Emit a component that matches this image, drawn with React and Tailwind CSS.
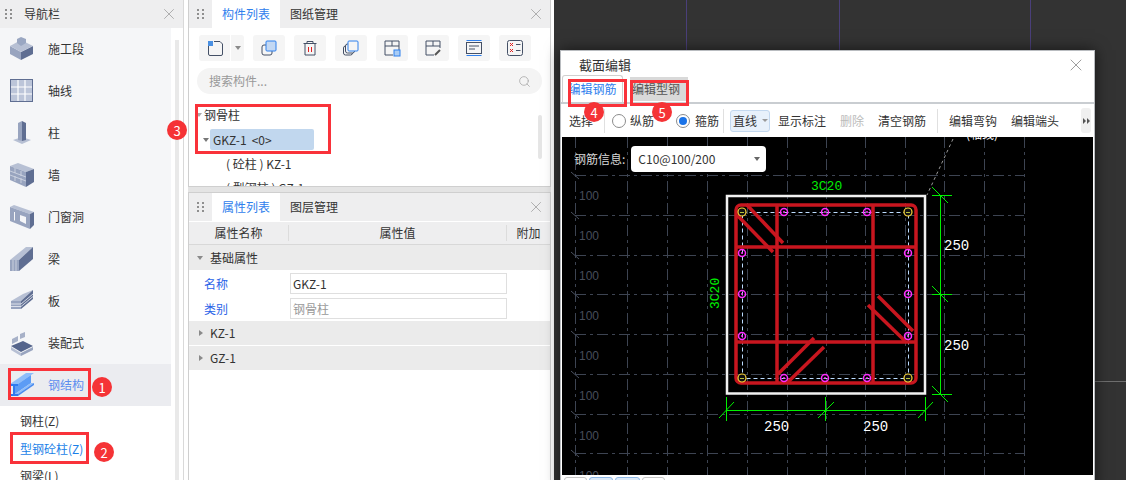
import { X, Search } from 'lucide-react'

const NAV_ITEMS = ['施工段', '轴线', '柱', '墙', '门窗洞', '梁', '板', '装配式']
const TOP = '#b7c0d4'
const LEFT = '#98a4bf'
const DARK = '#5f6e92'

function NavIcon({ index }) {
  const shapes = [
    <>
      <polygon points="1,10 12,16 12,24 1,18" fill={LEFT} />
      <polygon points="12,16 24,10 24,18 12,24" fill={DARK} />
      <polygon points="1,10 12,4 24,10 12,16" fill={TOP} />
      <polygon points="8,3 12,1 17,3 17,7 12,10 8,7" fill="#9aa7c2" />
    </>,
    <>
      <rect x="1" y="1" width="23" height="23" fill="#5f6e92" />
      <rect x="2" y="2" width="21" height="21" fill="#bcc5d9" />
      <path d="M9 2v21M16 2v21M2 9h21M2 16h21" stroke="#fff" strokeWidth="1.2" />
    </>,
    <>
      <polygon points="4,20 13,17 22,20 13,24" fill={TOP} />
      <polygon points="9,3 13,1 13,21 9,20" fill={LEFT} />
      <polygon points="13,1 17,3 17,20 13,21" fill={DARK} />
    </>,
    <>
      <polygon points="1,4 9,1 25,7 17,10" fill={TOP} />
      <polygon points="1,4 17,10 17,25 1,18" fill={LEFT} />
      <polygon points="17,10 25,7 25,20 17,25" fill={DARK} />
      <path d="M1 9l16 6M1 13l16 6M6 6v5M12 9v5M6 14v5M12 16v5" stroke="#d5dae6" strokeWidth=".8" />
    </>,
    <>
      <polygon points="1,3 5,1 25,8 21,10" fill={TOP} />
      <polygon points="1,3 21,10 21,25 1,17" fill={LEFT} />
      <polygon points="21,10 25,8 25,21 21,25" fill={DARK} />
      <polygon points="5,8 6,8 6,17 5,16" fill="#f5f6f8" />
      <polygon points="11,11 17,13 17,20 11,17" fill="#f5f6f8" />
    </>,
    <>
      <polygon points="1,14 17,1 24,1 10,14" fill={TOP} />
      <polygon points="1,14 10,14 10,25 1,25" fill={LEFT} />
      <polygon points="10,14 24,1 24,13 10,25" fill={DARK} />
      <path d="M4 14v11M7 14v11" stroke="#d5dae6" strokeWidth=".8" />
    </>,
    <>
      <polygon points="2,13 14,6 24,2 12,13" fill={TOP} />
      <polygon points="2,13 12,13 12,21 2,21" fill={LEFT} />
      <polygon points="12,13 24,2 24,11 12,21" fill={DARK} />
      <path d="M2 16h10M2 18.500h10M12 16l12-10M12 18.500l12-10" stroke="#eef0f5" strokeWidth=".8" />
    </>,
    <>
      <polygon points="2,16 14,11 24,16 12,22" fill="#55658c" />
      <polygon points="2,17 12,23 12,26 2,20" fill={TOP} />
      <polygon points="12,23 24,17 24,20 12,26" fill={LEFT} />
      <polygon points="3,9 9,6 9,11 3,14" fill="#a7b1c8" />
      <polygon points="11,4 16,2 16,7 11,9" fill="#a7b1c8" />
    </>,
  ]
  return (
    <svg width="26" height="26" viewBox="0 0 26 26" className="ml-[9px] mr-[13px] shrink-0">
      {shapes[index]}
    </svg>
  )
}

function SteelIcon() {
  return (
    <svg width="26" height="26" viewBox="0 0 26 26" className="ml-[9px] mr-[13px] shrink-0">
      <polygon points="1,12 9,12 25,1 17,1" fill="#8dbdfa" />
      <polygon points="6,14 22,3 22,11 6,22" fill="#5c9cf5" />
      <polygon points="6,22 22,11 25,11 9,22" fill="#8dbdfa" />
      <polygon points="9,22 25,11 25,13 9,24" fill="#4a8cf0" />
      <polygon points="1,12 9,12 9,14 6,14 6,22 9,22 9,24 1,24 1,22 4,22 4,14 1,14" fill="#2f7bf0" />
    </svg>
  )
}

function Grip() {
  return (
    <span className="grid w-[7px] shrink-0 grid-cols-2 gap-[2px]">
      {[0, 1, 2, 3, 4, 5].map((i) => (
        <i key={i} className="size-[2px] bg-[#8f8f8f]" />
      ))}
    </span>
  )
}

function PanelTabs({ active, other }) {
  return (
    <div className="flex h-7 shrink-0 items-stretch bg-[#eeeeef]">
      <div className="flex w-[23px] items-center justify-center"><Grip /></div>
      <div className="flex w-[68px] items-center justify-center bg-white text-[#2f80ed]">{active}</div>
      <div className="ml-[10px] flex items-center text-[#333]">{other}</div>
      <X size={18} strokeWidth={1} className="ml-auto mr-[5px] self-center text-[#9a9a9a]" />
    </div>
  )
}

function ToolButton({ children }) {
  return (
    <div className="flex h-[26px] w-8 items-center justify-center rounded-[3px] bg-[#f5f5f5]">
      <svg width="18" height="18" viewBox="0 0 18 18" fill="none" stroke="#445066" strokeWidth="1">{children}</svg>
    </div>
  )
}

function Badge({ n, className }) {
  return (
    <div className={`absolute flex size-5 items-center justify-center rounded-full bg-[#f53336] text-[13px] leading-none text-white ${className}`}>
      {n}
    </div>
  )
}

function RedBox({ className }) {
  return <div className={`pointer-events-none absolute border-[3px] border-[#f9323a] ${className}`} />
}

function Radio({ checked }) {
  return (
    <span className="flex size-[14px] items-center justify-center rounded-full border border-[#8c8c8c] bg-white">
      {checked && <i className="size-2 rounded-full bg-[#1a73e8]" />}
    </span>
  )
}

const GRID_X = [575, 627, 667, 707, 747, 787, 826, 865, 905, 944, 984, 1024]
const GRID_Y = [175, 215, 255, 294, 334, 374, 414, 453]
const LABEL_Y = [195, 235, 275, 315, 355, 395, 435, 475]
const DOTS = [
  [784, 212], [825, 212], [867, 212], [784, 378], [825, 378], [867, 378],
  [742, 253], [742, 294], [742, 336], [908, 253], [908, 294], [908, 336],
]
const CORNERS = [[742, 212], [908, 212], [742, 378], [908, 378]]
const BARS = [
  [747, 205, 783, 243], [737, 215, 773, 252],
  [878, 296, 913, 331], [868, 305, 905, 341],
  [814, 338, 778, 374], [824, 347, 788, 382],
]

function SectionDrawing() {
  return (
    <svg className="absolute inset-0" width="531" height="338" viewBox="562 137 531 338">
      <g stroke="#3d4452" strokeDasharray="11 4 3 4" fill="none">
        {GRID_X.map((x) => <path key={x} d={`M${x + 0.5} 137V480`} />)}
        {GRID_Y.map((y) => <path key={y} d={`M575 ${y + 0.5}H1024`} />)}
      </g>
      <g stroke="#4a5160" fill="none">
        {GRID_Y.map((y) => <path key={y} d={`M571 ${y - 3}l8 7`} />)}
      </g>
      {LABEL_Y.map((y) => (
        <text key={y} x="579" y={y + 5} fill="#474d5a" fontSize="12" fontFamily="Liberation Sans">100</text>
      ))}
      <path d="M953 139L927 195" stroke="#9a9a9a" strokeDasharray="3 3" />
      <text x="982" y="139" fill="#fff" fontSize="12" textAnchor="middle" fontFamily="Noto Sans CJK SC">(轴线)</text>

      <rect x="727" y="196" width="198" height="197.500" fill="none" stroke="#f2f2f2" strokeWidth="2.500" />

      <rect x="742.500" y="212.500" width="166" height="166" fill="none" stroke="#bcdcff" strokeDasharray="4 3" />
      <g stroke="#c8161f" strokeWidth="3.500" fill="none">
        <rect x="736" y="205" width="180" height="178" rx="5" />
        <path d="M777 205V383M873 205V383M736 247H916M736 342H916" />
        {BARS.map(([a, b, c, d]) => <path key={a} d={`M${a} ${b}L${c} ${d}`} />)}
      </g>
      {DOTS.map(([x, y]) => (
        <g key={`${x}-${y}`}>
          <circle cx={x} cy={y} r="3.500" fill="none" stroke="#ff2cff" strokeWidth="1.500" />
          <circle cx={x} cy={y} r="1" fill="#ff2cff" />
        </g>
      ))}
      {CORNERS.map(([x, y]) => (
        <g key={`${x}-${y}`}>
          <circle cx={x} cy={y} r="4" fill="#111" stroke="#ffd93b" strokeWidth="1.200" />
          <path d={`M${x - 2} ${y + 0.5}h4`} stroke="#b8c23a" />
        </g>
      ))}

      <g stroke="#00f000" strokeWidth="1" fill="none">
        <path d="M940.500 195V394M932 195.500H952M932 294.500H952M932 394.500H952" />
        <path d="M726.500 397V421M825.500 397V421M925.500 397V421M726 410.500H926" />
        <path d="M932 187L948 203M932 286L948 302M932 386L948 402" />
        <path d="M719 418L734 402M818 418L834 402M918 418L933 402" />
      </g>
      <g fill="#fff" fontSize="14" fontFamily="Liberation Mono">
        <text x="764" y="431">250</text>
        <text x="863" y="431">250</text>
        <text x="944" y="250">250</text>
        <text x="944" y="350">250</text>
      </g>
      <g fill="#00f000" fontSize="13" fontFamily="Liberation Mono">
        <text x="811" y="190">3C20</text>
        <text x="0" y="0" transform="translate(719 309) rotate(-90)">3C20</text>
      </g>
    </svg>
  )
}

export default function App() {
  return (
    <div className="relative flex h-[480px] w-[1126px] overflow-hidden bg-white font-['Noto_Sans_CJK_SC','Liberation_Sans',sans-serif] text-xs text-[#333]">
      {/* 导航栏 */}
      <aside className="flex w-[184px] shrink-0 flex-col border-r border-[#d9d9d9]">
        <div className="flex h-7 shrink-0 items-center bg-[#eeeeef] pl-[5px]">
          <Grip />
          <span className="ml-3">导航栏</span>
          <X size={18} strokeWidth={1} className="ml-auto mr-[5px] text-[#9a9a9a]" />
        </div>
        <div className="flex min-h-0 flex-1">
          <div className="w-[171px] shrink-0">
            <div className="bg-[#f5f6f8]">
              {NAV_ITEMS.map((name, i) => (
                <div key={name} className="flex h-[42px] items-center">
                  <NavIcon index={i} />
                  {name}
                </div>
              ))}
              <div className="flex h-[42px] items-center bg-[#ebecf0] text-[#5b8def]">
                <SteelIcon />
                钢结构
              </div>
            </div>
            <div className="pl-5 leading-[27.500px]">
              <div className="mt-[1px]">钢柱(Z)</div>
              <div className="text-[#1a7fe8]">型钢砼柱(Z)</div>
              <div>钢梁(L)</div>
            </div>
          </div>
          <div className="mt-3 ml-1 w-1 bg-[#e9e9e9]" />
        </div>
      </aside>

      {/* 构件列表 + 属性列表 */}
      <main className="ml-[4px] flex w-[363px] shrink-0 flex-col bg-[#e4e4e4]">
        <section className="flex h-[187px] shrink-0 flex-col overflow-hidden border border-t-0 border-[#cfcfcf] bg-white">
          <PanelTabs active="构件列表" other="图纸管理" />
          <div className="mt-[7px] flex items-center gap-[9px] pl-[10px]">
            <div className="flex h-[26px] w-[45px] rounded-[3px] bg-[#f5f5f5]">
              <div className="flex w-8 items-center justify-center border-r border-white">
                <svg width="18" height="18" viewBox="0 0 18 18" fill="none" stroke="#445066">
                  <path d="M2.500 6.500V15a1.500 1.500 0 0 0 1.500 1.500H15a1.500 1.500 0 0 0 1.500-1.500V5L14 2.500H8" />
                  <rect x="2" y="2" width="5" height="5" fill="#4a90e2" stroke="none" />
                </svg>
              </div>
              <i className="mt-[11px] ml-[4px] size-0 border-x-[3px] border-t-[4px] border-x-transparent border-t-[#8a8a8a]" />
            </div>
            <ToolButton>
              <rect x="2" y="6" width="10" height="10" rx="2" />
              <rect x="6" y="2" width="10" height="10" rx="1" fill="#c3d8f3" stroke="#2f80ed" />
            </ToolButton>
            <ToolButton>
              <path d="M2.500 4.500h13M6 4.500V2.500h6v2M4 4.500v11.500h10V4.500" />
              <path d="M7.500 8v5M10.500 8v5" stroke="#e02020" />
            </ToolButton>
            <ToolButton>
              <rect x="1.500" y="7" width="9" height="9" rx="2" />
              <rect x="3.500" y="5" width="9" height="9" rx="2" fill="#f5f5f5" />
              <rect x="6" y="2" width="10" height="10" rx="1" fill="#f5f5f5" stroke="#2f80ed" />
            </ToolButton>
            <ToolButton>
              <path d="M2 16V2h14v9M2 7h14M9 2v5M2 16h8" />
              <rect x="11" y="11" width="6" height="6" fill="#a9ccf5" stroke="#2f80ed" />
            </ToolButton>
            <ToolButton>
              <path d="M2 16V2h14v7M2 7h14M9 2v5M2 16h8" />
              <path d="M11 16l5-5" stroke="#555" strokeWidth="2" />
            </ToolButton>
            <ToolButton>
              <path d="M1.500 1.500h15M1.500 16.500h15" stroke="#2f80ed" />
              <rect x="1.500" y="3.500" width="15" height="11" />
              <path d="M4 7h10M4 10h6" />
            </ToolButton>
            <ToolButton>
              <rect x="1.500" y="1.500" width="15" height="15" rx="2" />
              <path d="M4 4l3 3M7 4L4 7M4 10l3 3M7 10l-3 3" stroke="#e02020" />
              <path d="M10 5.500h4.500M10 11.500h4.500" />
            </ToolButton>
          </div>
          <div className="mx-2 mt-[7px] flex h-[26px] shrink-0 items-center rounded-full bg-[#f4f4f4] pl-3 pr-[11px] text-[#999]">
            搜索构件...
            <Search size={13} strokeWidth={1.5} className="ml-auto text-[#aaa]" />
          </div>
          <div className="relative mt-[9px] pl-[15px] leading-[24px]">
            <div className="flex h-[24px] items-center">钢骨柱</div>
            <div className="-ml-[-6px] mt-[2px] flex h-[21px] w-[104px] items-center rounded-[2px] bg-[#c1d7ee] pl-[3px]">
              GKZ-1 <span className="ml-[5px]">&lt;0&gt;</span>
            </div>
            <div className="mt-[2px] pl-[22px]">( 砼柱 ) KZ-1</div>
            <div className="pl-[22px]">( 型钢柱 ) GZ-1</div>
            <i className="absolute left-[7px] top-[10px] size-0 border-x-[3px] border-t-[4px] border-x-transparent border-t-[#aaa]" />
            <i className="absolute left-[14px] top-[35px] size-0 border-x-[3px] border-t-[4px] border-x-transparent border-t-[#777]" />
            <i className="absolute right-[8px] top-[12px] h-11 w-1 rounded bg-[#e6e6e6]" />
          </div>
        </section>

        <section className="mt-[5px] flex min-h-0 flex-1 flex-col border border-b-0 border-[#cfcfcf] bg-white">
          <PanelTabs active="属性列表" other="图层管理" />
          <div className="mt-[1px] flex h-[23px] shrink-0 items-center border-b border-[#d8d8d8] bg-[#eeeeef] text-center">
            <div className="w-[100px] border-r border-[#dcdcdc]">属性名称</div>
            <div className="w-[218px] border-r border-[#dcdcdc]">属性值</div>
            <div className="flex-1">附加</div>
          </div>
          <div className="flex h-[25px] items-center bg-[#ebebeb] pl-[8px]">
            <i className="mr-[7px] size-0 border-x-[3px] border-t-[4px] border-x-transparent border-t-[#8a8a8a]" />
            基础属性
          </div>
          <div className="mt-[3px] flex h-[21px] items-center text-[#2b63e8]">
            <span className="w-[101px] pl-[15px]">名称</span>
            <div className="flex h-[21px] w-[217px] items-center border border-[#dfdfdf] pl-[2px] text-[#333]">GKZ-1</div>
          </div>
          <div className="mt-[4px] flex h-[21px] items-center text-[#2b63e8]">
            <span className="w-[101px] pl-[15px]">类别</span>
            <div className="flex h-[21px] w-[217px] items-center border border-[#dfdfdf] pl-[2px] text-[#999]">钢骨柱</div>
          </div>
          <div className="mt-[2px] flex h-[24px] items-center bg-[#ebebeb] pl-[10px]">
            <i className="mr-[7px] size-0 border-y-[3px] border-l-[4px] border-y-transparent border-l-[#8a8a8a]" />
            KZ-1
          </div>
          <div className="mt-[1px] flex h-[24px] items-center bg-[#ebebeb] pl-[10px]">
            <i className="mr-[7px] size-0 border-y-[3px] border-l-[4px] border-y-transparent border-l-[#8a8a8a]" />
            GZ-1
          </div>
        </section>
      </main>

      {/* 绘图区 */}
      <div className="relative ml-[3px] flex-1 bg-[#333]">
        <i className="absolute left-[132px] top-0 h-[50px] w-px bg-[#4a3f7a]" />
        <i className="absolute left-[285px] top-0 h-[50px] w-px bg-[#4a3f7a]" />
        <i className="absolute left-[476px] top-0 h-[50px] w-px bg-[#4a3f7a]" />
        <i className="absolute left-[541px] right-0 top-[381px] h-px bg-[#6e6e6e]" />
      </div>

      {/* 截面编辑 窗口 */}
      <div className="absolute left-[560px] top-[50px] flex h-[440px] w-[535px] flex-col border border-[#b9bcc0] bg-white shadow-[0_0_14px_rgba(0,0,0,.6)]">
        <div className="flex h-[25px] shrink-0 items-center justify-between pl-[18px] pr-[8px] pt-[3px] text-[13px]">
          截面编辑
          <X size={20} strokeWidth={1} className="text-[#8a8a8a]" />
        </div>
        <div className="flex h-[28px] shrink-0 items-end border-b-2 border-[#c9cdd1]">
          <div className="ml-[1px] flex h-[27px] w-[61px] items-center justify-center rounded-t-[3px] border border-b-0 border-[#d0d0d0] bg-white text-[#2f80ed]">编辑钢筋</div>
          <div className="ml-[7px] mb-[1px] flex h-[24px] w-[58px] items-center bg-[#d9d9d9] pl-[2px] text-[#555]">编辑型钢</div>
        </div>
        <div className="flex h-[33px] shrink-0 items-center pl-2 pr-[3px]">
          <span>选择</span>
          <i className="ml-[11px] h-6 w-px bg-[#e0e0e0]" />
          <span className="ml-[7px]"><Radio /></span>
          <span className="ml-[4px]">纵筋</span>
          <span className="ml-[22px]"><Radio checked /></span>
          <span className="ml-[5px]">箍筋</span>
          <i className="ml-[4px] h-6 w-px bg-[#e0e0e0]" />
          <div className="ml-[6px] flex h-[22px] w-10 items-center rounded-[3px] border border-[#c3d8ef] bg-[#e8f1fb] pl-[2px]">
            直线
            <i className="ml-[5px] size-0 border-x-[3px] border-t-[3px] border-x-transparent border-t-[#999]" />
          </div>
          <span className="ml-2">显示标注</span>
          <span className="ml-[14px] text-[#bbb]">删除</span>
          <span className="ml-[14px]">清空钢筋</span>
          <i className="ml-[11px] h-6 w-px bg-[#e0e0e0]" />
          <span className="ml-[11px]">编辑弯钩</span>
          <span className="ml-[14px]">编辑端头</span>
          <div className="ml-auto flex h-[25px] w-[10px] items-center justify-center gap-px rounded-[3px] bg-[#f0f0f0]">
            <i className="size-0 border-y-[3px] border-l-[3px] border-y-transparent border-l-[#555]" />
            <i className="size-0 border-y-[3px] border-l-[3px] border-y-transparent border-l-[#555]" />
          </div>
        </div>
        <div className="relative mx-[1px] h-[338px] shrink-0 overflow-hidden bg-black">
          <SectionDrawing />
          <div className="absolute left-[12px] top-[9px] flex items-center text-[#d8d8d8]">
            钢筋信息:
            <div className="ml-[6px] flex h-[26px] w-[135px] items-center rounded-[4px] bg-white pl-[7px] text-[#333]">
              C10@100/200
              <i className="ml-auto mr-[6px] size-0 border-x-[3px] border-t-[4px] border-x-transparent border-t-[#666]" />
            </div>
          </div>
        </div>
        <div className="mt-[2px] flex gap-[2px] pl-[3px]">
          <i className="h-6 w-[23px] rounded-[3px] border border-[#c4c4c4] bg-white" />
          <i className="h-6 w-[24px] rounded-[3px] border border-[#8fb8e6] bg-[#dbe9f8]" />
          <i className="h-6 w-[25px] rounded-[3px] border border-[#8fb8e6] bg-[#dbe9f8]" />
          <i className="h-6 w-[23px] rounded-[3px] border border-[#c4c4c4] bg-white" />
        </div>
      </div>

      {/* 标注 */}
      <RedBox className="left-[8px] top-[368px] h-[32px] w-[83px]" />
      <RedBox className="left-[10px] top-[432px] h-[32px] w-[79px]" />
      <RedBox className="left-[195px] top-[104px] h-[50px] w-[136px]" />
      <RedBox className="left-[568px] top-[79px] h-[28px] w-[59px]" />
      <RedBox className="left-[630px] top-[80px] h-[26px] w-[59px]" />
      <Badge n="1" className="left-[92px] top-[377px]" />
      <Badge n="2" className="left-[94px] top-[442px]" />
      <Badge n="3" className="left-[167px] top-[120px]" />
      <Badge n="4" className="left-[584px] top-[102px]" />
      <Badge n="5" className="left-[652px] top-[102px]" />
    </div>
  )
}
